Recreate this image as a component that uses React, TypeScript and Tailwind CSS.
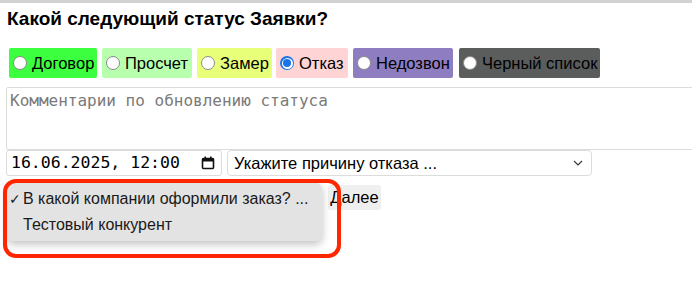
import React from "react";

const options = [
  { label: "Договор", bg: "bg-[#3bff3f]", w: "w-[88px]" },
  { label: "Просчет", bg: "bg-[#b8ffae]", w: "w-[90px]" },
  { label: "Замер", bg: "bg-[#e7ff79]", w: "w-[75px]" },
  { label: "Отказ", bg: "bg-[#ffd4d4]", w: "w-[72px]", checked: true },
  { label: "Недозвон", bg: "bg-[#8f7dc1]", w: "w-[100px]" },
  { label: "Черный список", bg: "bg-[#5a5d5c]", w: "w-[141px]" },
];

function Radio({ checked }: { checked?: boolean }) {
  if (checked) {
    return (
      <span className="flex h-[14px] w-[14px] shrink-0 items-center justify-center rounded-full bg-[#1a73e8]">
        <span className="flex h-[11px] w-[11px] items-center justify-center rounded-full bg-white">
          <span className="h-[8px] w-[8px] rounded-full bg-[#1a73e8]" />
        </span>
      </span>
    );
  }
  return <span className="h-[14px] w-[14px] shrink-0 rounded-full border border-[#8a8a8a] bg-white" />;
}

export default function App() {
  return (
    <div className="relative h-[282px] w-[692px] overflow-hidden bg-white font-['Liberation_Sans',Arial,sans-serif] text-black">
      <div className="h-[3px] bg-[#d2d2d2]" />
      <h1 className="mt-[5px] pl-[7px] text-[19px] font-bold leading-[22px]">Какой следующий статус Заявки?</h1>
      <div className="mt-[18px] flex pl-[9px]">
        {options.map((o, i) => (
          <div
            key={o.label}
            className={`flex h-[30px] items-center gap-[5px] rounded-[2px] pl-[4px] ${o.bg} ${o.w} ${
              i === 0 ? "" : i === 3 ? "ml-[4px]" : i === 5 ? "ml-[6px]" : "ml-[5px]"
            }`}
          >
            <Radio checked={o.checked} />
            <span className="whitespace-nowrap text-[16.5px] leading-none">{o.label}</span>
          </div>
        ))}
      </div>
      <div className="ml-[6px] mt-[9px] h-[63px] w-[700px] rounded-[2px] border border-[#dcdcdc] px-[3px] pt-[3px] font-['DejaVu_Sans_Mono',monospace] text-[16px] leading-[20px] text-[#7a7a7a]">
        Комментарии по обновлению статуса
      </div>
      <div className="flex items-center gap-[5px] pl-[6px]">
        <div className="flex h-[26px] w-[216px] items-center justify-between rounded-[3px] border border-[#dcdcdc] pl-[4px] pr-[6px] font-['DejaVu_Sans_Mono',monospace] text-[16.5px] leading-none">
          <span>16.06.2025, 12:00</span>
          <svg width="14" height="14" viewBox="0 0 14 14">
            <rect x="1.5" y="2.5" width="11" height="10" rx="1" fill="none" stroke="#111" strokeWidth="1.6" />
            <rect x="1.5" y="2.5" width="11" height="3" fill="#111" />
            <rect x="3.5" y="0.5" width="1.6" height="2.5" fill="#111" />
            <rect x="9" y="0.5" width="1.6" height="2.5" fill="#111" />
          </svg>
        </div>
        <div className="flex h-[26px] w-[365px] items-center justify-between rounded-[4px] border border-[#dcdcdc] pl-[6px] pr-[8px] text-[16.5px] leading-none">
          <span>Укажите причину отказа ...</span>
          <svg width="10" height="6" viewBox="0 0 10 6">
            <path d="M1 1l4 4 4-4" fill="none" stroke="#333" strokeWidth="1.1" />
          </svg>
        </div>
      </div>
      <div className="ml-[328px] mt-[9px] flex h-[25px] w-[53px] items-center justify-center rounded-[3px] bg-[#efefef] text-[16.5px] leading-none">
        Далее
      </div>

      <div className="absolute left-[7px] top-[183px] w-[315px] rounded-[6px] bg-[#e3e3e3] py-[3px] text-[16px] leading-none text-[#1a1a1a] shadow-[0_3px_8px_rgba(0,0,0,0.25)]">
        <div className="flex h-[26px] items-center">
          <span className="w-[16px] pl-[2px] text-[14px]">✓</span>
          <span className="whitespace-nowrap">В какой компании оформили заказ? ...</span>
        </div>
        <div className="flex h-[26px] items-center pl-[16px]">Тестовый конкурент</div>
      </div>

      <div className="pointer-events-none absolute left-[3px] top-[179px] h-[79px] w-[338px] rounded-[13px] border-[4px] border-[#ff2600]" />
    </div>
  );
}
